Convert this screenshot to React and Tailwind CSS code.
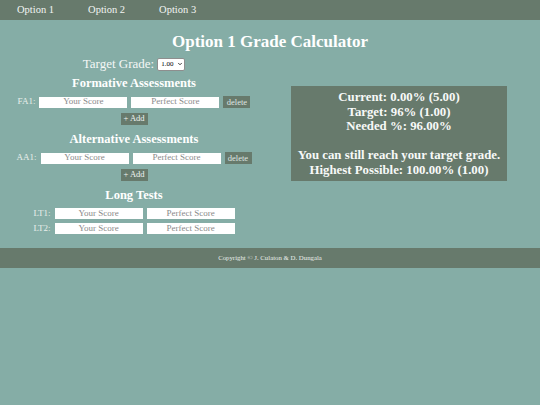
import { useState } from 'react'
import { ChevronDown } from 'lucide-react'

const serif = { fontFamily: '"Liberation Serif", "Times New Roman", serif' }

function ScoreRow({ label, onDelete, h = 'h-[16px]' }) {
  return (
    <div className={`flex items-center justify-center gap-[4px] ${h}`}>
      <span className="text-[9px] text-[#e9efec]">{label}:</span>
      <input
        placeholder="Your Score"
        style={serif}
        className="w-[88px] h-[11px] bg-white text-center text-[9px] text-black placeholder:text-[#8a8a8a] outline-none"
      />
      <input
        placeholder="Perfect Score"
        style={serif}
        className="w-[88px] h-[11px] bg-white text-center text-[9px] text-black placeholder:text-[#8a8a8a] outline-none"
      />
      {onDelete && (
        <button style={serif} className="h-[12px] w-[27px] bg-[#677a6c] text-[#dfe6e2] text-[8.5px] leading-none">delete</button>
      )}
    </div>
  )
}

function AddButton() {
  return (
    <div className="flex justify-center items-center h-[13px] mt-[2px]">
      <button style={serif} className="h-[12px] w-[27px] bg-[#677a6c] text-[#eef3f1] text-[8.5px] leading-none">+ Add</button>
    </div>
  )
}

export default function App() {
  const [target, setTarget] = useState('1.00')

  return (
    <div className="w-[540px] h-[405px] bg-[#85ada6] text-white" style={serif}>
      {/* nav */}
      <nav className="h-[20px] bg-[#677a6c] flex items-center">
        {['Option 1', 'Option 2', 'Option 3'].map((o) => (
          <a key={o} className="px-[17px] text-[10.5px] text-[#f2f5f3]">{o}</a>
        ))}
      </nav>

      <h1 className="text-center font-bold text-[17px] leading-[24px] mt-[10px] h-[24px]">Option 1 Grade Calculator</h1>

      <div className="flex h-[194px]">
        {/* left column */}
        <div className="w-[268px] flex flex-col">
          <div className="flex items-center justify-center gap-[3px] h-[20px]">
            <span className="text-[13px] text-[#f4f7f6]">Target Grade:</span>
            <div className="relative flex items-center">
              <select
                value={target}
                onChange={(e) => setTarget(e.target.value)}
                style={serif}
                className="appearance-none h-[13px] w-[28px] bg-white text-black text-[7px] leading-[11px] rounded-[2px] border border-[#8e8e8e] pl-[3px] pr-[8px]"
              >
                {['1.00', '1.25', '1.50', '1.75', '2.00', '2.25', '2.50', '2.75', '3.00'].map((g) => (
                  <option key={g}>{g}</option>
                ))}
              </select>
              <ChevronDown className="absolute right-[2px] top-1/2 -translate-y-1/2 w-[6px] h-[6px] text-black pointer-events-none" strokeWidth={3} />
            </div>
          </div>

          <h2 className="text-center font-bold text-[12.5px] leading-[18px] h-[18px]">Formative Assessments</h2>
          <div className="mt-[2px]">
            <ScoreRow label="FA1" onDelete />
          </div>
          <AddButton />

          <h2 className="text-center font-bold text-[12.5px] leading-[18px] h-[18px] mt-[5px]">Alternative Assessments</h2>
          <div className="mt-[2px]">
            <ScoreRow label="AA1" onDelete />
          </div>
          <AddButton />

          <h2 className="text-center font-bold text-[12.5px] leading-[18px] h-[18px] mt-[5px]">Long Tests</h2>
          <div className="mt-[2px] flex flex-col">
            <ScoreRow label="LT1" h="h-[15px]" />
            <ScoreRow label="LT2" h="h-[15px]" />
          </div>
        </div>

        {/* right column */}
        <div className="flex-1 pt-[32px] pl-[23px]">
          <div className="w-[216px] h-[95px] bg-[#677a6c] flex flex-col items-center justify-center font-bold text-[12.8px] leading-[14.5px] text-[#f7f9f8]">
            <div>Current: 0.00% (5.00)</div>
            <div>Target: 96% (1.00)</div>
            <div>Needed %: 96.00%</div>
            <div className="h-[14.5px]" />
            <div>You can still reach your target grade.</div>
            <div>Highest Possible: 100.00% (1.00)</div>
          </div>
        </div>
      </div>

      <footer className="h-[20px] bg-[#677a6c] flex items-center justify-center text-[6.8px] text-[#e8eeea]">
        Copyright © J. Culaton &amp; D. Dungala
      </footer>
    </div>
  )
}
